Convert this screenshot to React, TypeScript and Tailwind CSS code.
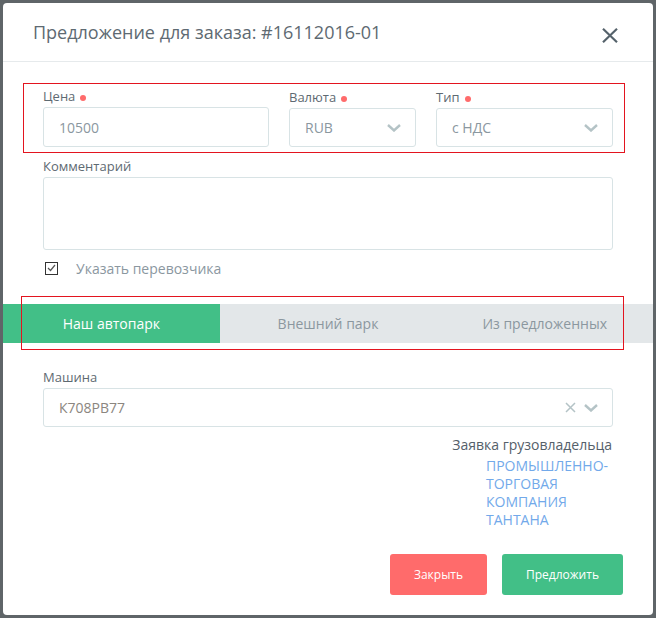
import React from "react";

const Chevron = () => (
  <svg width="14" height="8" viewBox="0 0 14 8" fill="none" className="block">
    <path d="M1 1l6 5.5L13 1" stroke="#b4c3c6" strokeWidth="2.4" />
  </svg>
);

const Dot = () => <span className="ml-[5px] inline-block w-[6px] h-[6px] rounded-full bg-[#ff6b6b] align-[0px]" />;

const Label = ({ children, dot, className = "" }: { children: React.ReactNode; dot?: boolean; className?: string }) => (
  <div className={`h-[20px] text-[13px] leading-[18px] text-[#5e6a72] ${className}`}>
    {children}
    {dot && <Dot />}
  </div>
);

const Field = ({ value, chevron, className = "" }: { value: string; chevron?: boolean; className?: string }) => (
  <div className={`h-[39px] border border-[#d8e3e5] rounded-[3px] pl-[15px] pr-[14px] flex items-center justify-between text-[14px] text-[#8b979f] ${className}`}>
    <span>{value}</span>
    {chevron && <Chevron />}
  </div>
);

export default function App() {
  return (
    <div className="relative w-[656px] h-[618px] overflow-hidden bg-[#5f6568] pt-[3px] pl-[3px] font-['Open_Sans',sans-serif]">
      <div className="w-[650px] h-[612px] bg-white rounded-[4px]">
        <div className="h-[59px] border-b border-[#e6eaec] pl-[30px] pr-[35px] flex items-center justify-between">
          <span className="text-[18px] text-[#5e6a72]">Предложение для заказа: #16112016-01</span>
          <svg width="16" height="15" viewBox="0 0 16 15" fill="none" className="mt-[7px]">
            <path d="M1 0.8l14 13.4M15 0.8L1 14.2" stroke="#55626b" strokeWidth="2.2" />
          </svg>
        </div>
        <div className="px-[40px] pt-[26px]">
          <div className="flex gap-[20px]">
            <div className="w-[226px]">
              <Label dot className="-mt-[1px]">Цена</Label>
              <Field value="10500" className="h-[40px]" />
            </div>
            <div className="w-[127px]">
              <Label dot>Валюта</Label>
              <Field value="RUB" chevron />
            </div>
            <div className="flex-1">
              <Label dot>Тип</Label>
              <Field value="с НДС" chevron />
            </div>
          </div>
          <div className="mt-[10px]">
            <Label>Комментарий</Label>
            <div className="h-[73px] border border-[#d8e3e5] rounded-[3px]" />
          </div>
          <div className="mt-[9px] flex items-center h-[18px] pl-[2px]">
            <span className="w-[13px] h-[13px] border border-[#333] flex items-center justify-center">
              <svg width="9" height="8" viewBox="0 0 9 8" fill="none">
                <path d="M1 4l2.5 2.5L8 1" stroke="#555" strokeWidth="1.2" />
              </svg>
            </span>
            <span className="ml-[18px] text-[14px] text-[#8b979f]">Указать перевозчика</span>
          </div>
        </div>
        <div className="mt-[27px] flex h-[39px] text-[14px]">
          <div className="flex-1 bg-[#42bf87] text-white flex items-center justify-center">Наш автопарк</div>
          <div className="flex-1 bg-[#e3e7e9] text-[#8b979f] flex items-center justify-center">Внешний парк</div>
          <div className="flex-1 bg-[#e3e7e9] text-[#8b979f] flex items-center justify-center">Из предложенных</div>
        </div>
        <div className="px-[40px] pt-[25px]">
          <Label>Машина</Label>
          <div className="h-[39px] border border-[#d8e3e5] rounded-[3px] pl-[15px] pr-[14px] flex items-center justify-between text-[14px] text-[#8b8680]">
            <span>К708РВ77</span>
            <span className="flex items-center gap-[8px]">
              <svg width="11" height="11" viewBox="0 0 11 11" fill="none">
                <path d="M1 1l9 9M10 1L1 10" stroke="#b4c3c6" strokeWidth="1.5" />
              </svg>
              <Chevron />
            </span>
          </div>
          <div className="mt-[9px] text-right pr-[1px] text-[14px] leading-[18px] text-[#55606a]">Заявка грузовладельца</div>
          <div className="mt-[3px] ml-[443px] w-[127px] text-[14px] leading-[18px] text-[#72a9ea]">
            ПРОМЫШЛЕННО-
            <br />
            ТОРГОВАЯ
            <br />
            КОМПАНИЯ
            <br />
            ТАНТАНА
          </div>
        </div>
        <div className="mt-[25px] pr-[30px] flex justify-end gap-[15px] text-[12px] text-white">
          <div className="w-[97px] h-[41px] rounded-[3px] bg-[#ff6b6b] flex items-center justify-center">Закрыть</div>
          <div className="w-[121px] h-[41px] rounded-[3px] bg-[#42bf87] flex items-center justify-center">Предложить</div>
        </div>
      </div>
      <div className="absolute left-[23px] top-[83px] w-[602px] h-[70px] border border-[#e3141f]" />
      <div className="absolute left-[21px] top-[296px] w-[603px] h-[54px] border border-[#e3141f]" />
    </div>
  );
}
